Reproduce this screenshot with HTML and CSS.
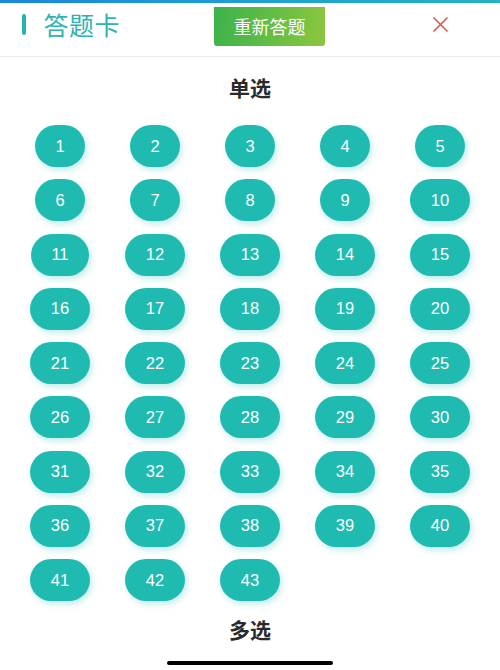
FILE: index.html
```html
<!DOCTYPE html>
<html lang="zh">
<head>
<meta charset="utf-8">
<link rel="stylesheet" href="styles.css">
</head>
<body>
<div class="topline"></div>
<header class="header">
  <div class="title-group">
    <span class="bar"></span>
    <span class="title">答题卡</span>
  </div>
  <button class="reset">重新答题</button>
  <span class="close">
    <svg width="17" height="17" viewBox="0 0 17 17"><path d="M1.5 1.5 L15.5 15.5 M15.5 1.5 L1.5 15.5" stroke="#e0564c" stroke-width="1.6" fill="none"/></svg>
  </span>
</header>
<main>
  <h2 class="section">单选</h2>
  <div class="grid">
    <span class="num">1</span><span class="num">2</span><span class="num">3</span><span class="num">4</span><span class="num">5</span>
    <span class="num">6</span><span class="num">7</span><span class="num">8</span><span class="num">9</span><span class="num">10</span>
    <span class="num">11</span><span class="num">12</span><span class="num">13</span><span class="num">14</span><span class="num">15</span>
    <span class="num">16</span><span class="num">17</span><span class="num">18</span><span class="num">19</span><span class="num">20</span>
    <span class="num">21</span><span class="num">22</span><span class="num">23</span><span class="num">24</span><span class="num">25</span>
    <span class="num">26</span><span class="num">27</span><span class="num">28</span><span class="num">29</span><span class="num">30</span>
    <span class="num">31</span><span class="num">32</span><span class="num">33</span><span class="num">34</span><span class="num">35</span>
    <span class="num">36</span><span class="num">37</span><span class="num">38</span><span class="num">39</span><span class="num">40</span>
    <span class="num">41</span><span class="num">42</span><span class="num">43</span>
  </div>
  <h2 class="section multi">多选</h2>
</main>
<div class="home-indicator"></div>
</body>
</html>
```
FILE: styles.css
```css
html, body {
  margin: 0;
  padding: 0;
  background: #fff;
}
body {
  width: 500px;
  height: 670px;
  overflow: hidden;
  font-family: "Liberation Sans", "Noto Sans CJK SC", sans-serif;
  position: relative;
}
.topline {
  height: 3px;
  background: linear-gradient(90deg, #1a86dd 0%, #1f9fd4 50%, #22b5bd 100%);
}
.header {
  display: flex;
  align-items: center;
  height: 42px;
  padding-bottom: 11px;
  border-bottom: 1px solid #ececec;
}
.title-group {
  display: flex;
  align-items: center;
  width: 98px;
  padding-left: 22px;
}
.bar {
  width: 5px;
  height: 21px;
  border-radius: 3px;
  background: #26b5ad;
  margin-right: 17px;
}
.title {
  font-family: "Noto Sans CJK SC", sans-serif;
  font-size: 25px;
  font-weight: 400;
  color: #2db3b0;
  line-height: 30px;
  letter-spacing: 0.5px;
  white-space: nowrap;
}
.reset {
  margin-left: 94px;
  width: 111px;
  height: 39px;
  margin-top: 4px;
  border: none;
  border-radius: 0 0 3px 3px;
  background: linear-gradient(100deg, #3bb34a 0%, #62bd44 50%, #8dc63f 100%);
  color: #fff;
  font-family: "Noto Sans CJK SC", sans-serif;
  font-size: 18px;
  padding: 0;
}
.close {
  margin-left: 107px;
  display: flex;
}
.section {
  margin: 15px 0 0;
  text-align: center;
  font-family: "Noto Sans CJK SC", sans-serif;
  font-size: 21px;
  font-weight: 700;
  line-height: 30px;
  color: #2a2a2a;
}
.grid {
  display: grid;
  grid-template-columns: repeat(5, 95px);
  row-gap: 12.25px;
  padding: 0 12.5px;
  margin-top: 23px;
  justify-items: center;
}
.num {
  display: flex;
  align-items: center;
  justify-content: center;
  min-width: 48px;
  box-sizing: border-box;
  height: 42px;
  padding: 0 20.5px;
  border-radius: 21px;
  background: #1fbbb1;
  color: #fff;
  font-size: 16.5px;
  box-shadow: 2px 3px 6px rgba(31, 187, 177, 0.28);
}
.section.multi {
  margin-top: 13px;
}
.home-indicator {
  position: absolute;
  left: 167px;
  top: 661px;
  width: 166px;
  height: 4px;
  border-radius: 2px;
  background: #000;
}
```
